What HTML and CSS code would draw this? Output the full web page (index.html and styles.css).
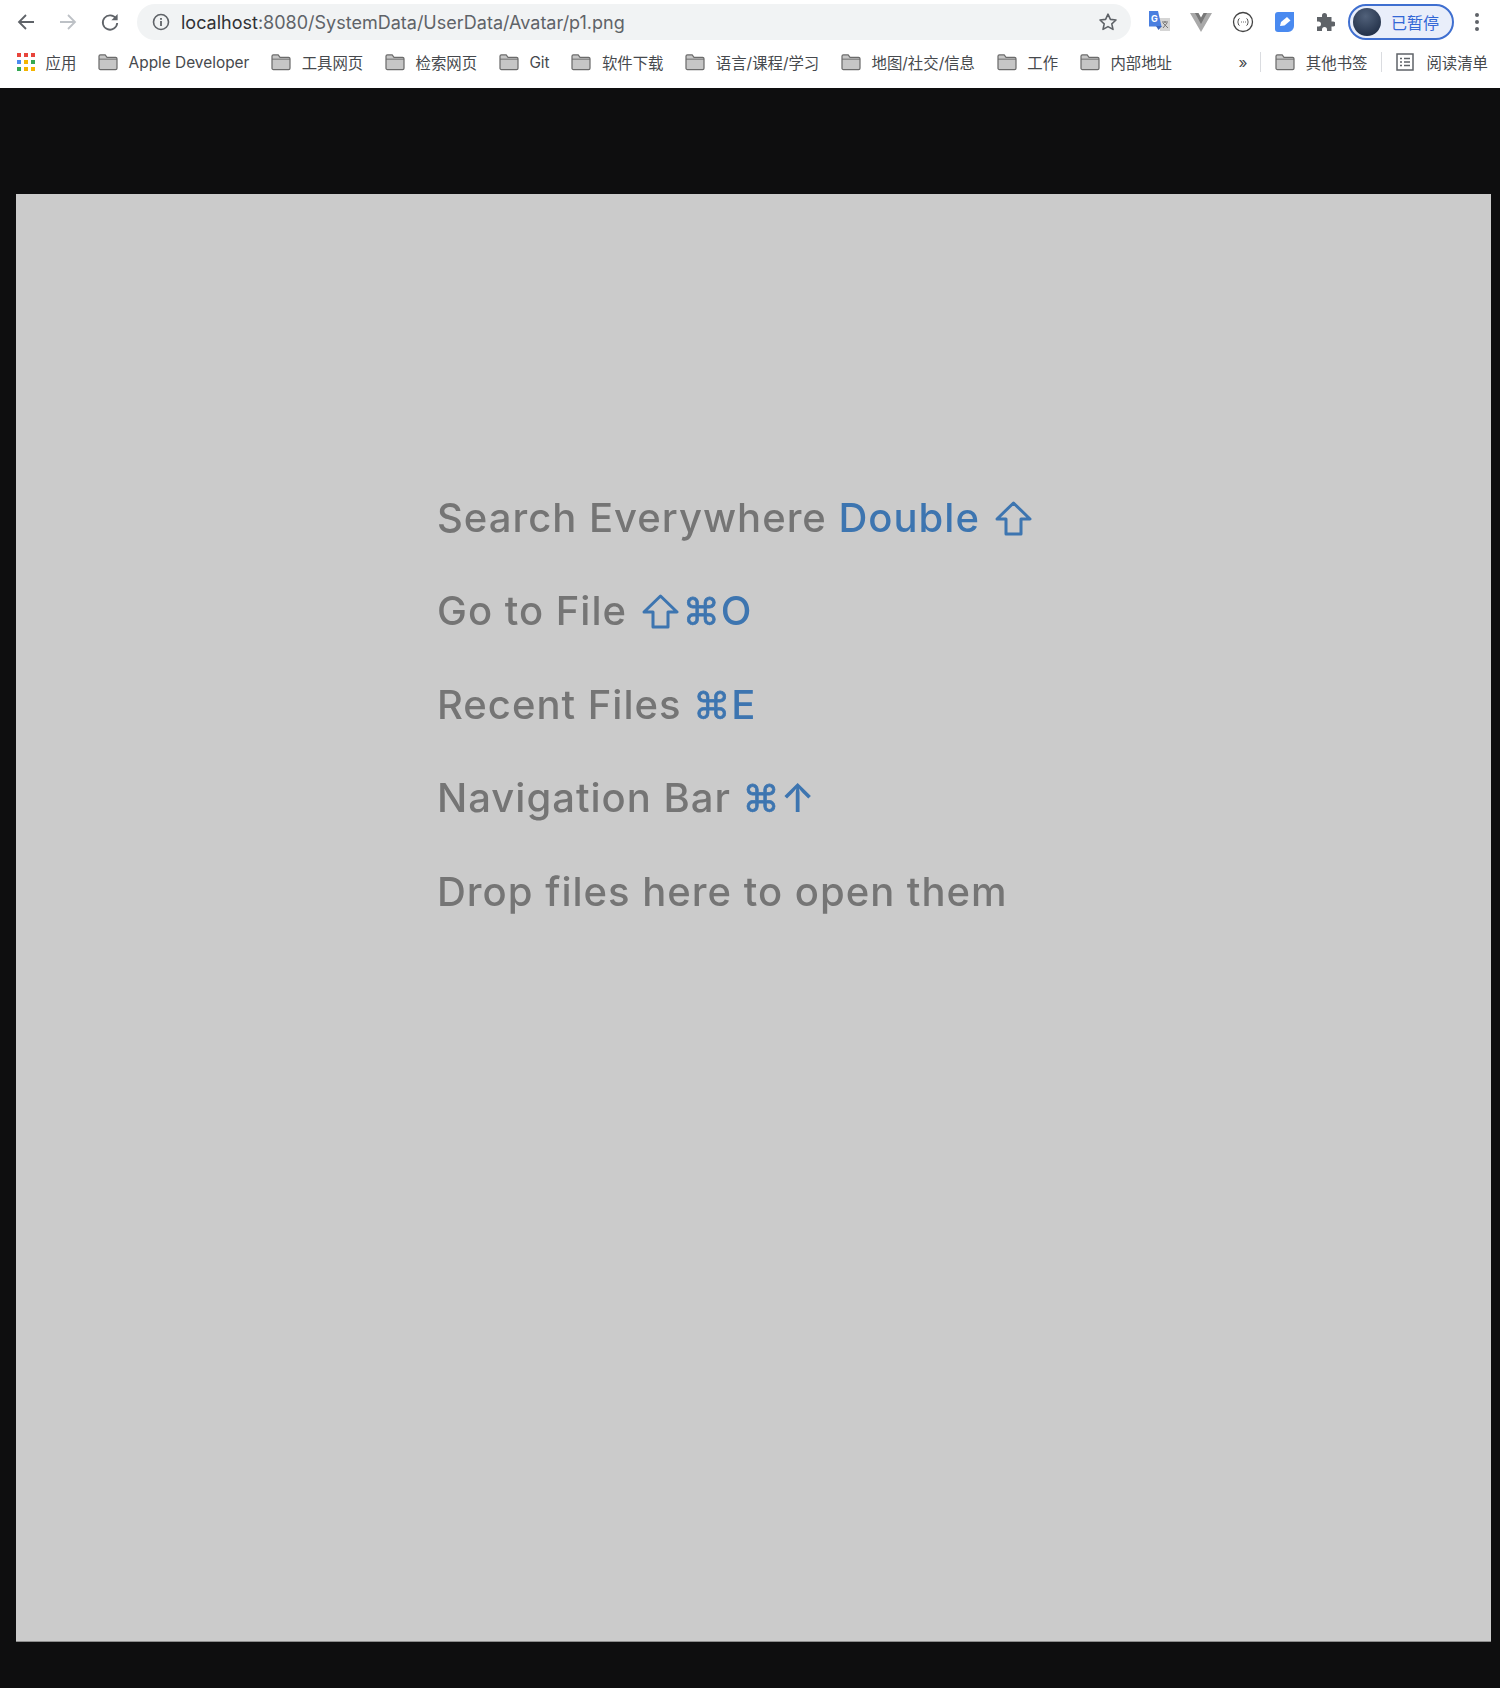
FILE: index.html
```html
<!DOCTYPE html>
<html lang="en">
<head>
  <meta charset="UTF-8">
  <meta name="viewport" content="width=device-width, initial-scale=1.0">
  <title>p1.png</title>
  <link rel="stylesheet" href="styles.css">
</head>
<body>

  <div class="toolbar">
    <svg class="nav-icon" viewBox="0 0 20 20"><path d="M18 10H3M10 3l-7 7 7 7" fill="none" stroke="#5f6368" stroke-width="1.8"/></svg>
    <svg class="nav-icon" viewBox="0 0 20 20"><path d="M2 10h15M10 3l7 7-7 7" fill="none" stroke="#bdc1c6" stroke-width="1.8"/></svg>
    <svg class="nav-icon" viewBox="0 0 20 20"><path d="M16 6.500A7.200 7.200 0 1 0 17.200 11" fill="none" stroke="#5f6368" stroke-width="1.8"/><path d="M17.600 2v6.200h-6.200z" fill="#5f6368"/></svg>

    <div class="address">
      <svg class="info-icon" viewBox="0 0 18 18"><circle cx="9" cy="9" r="7.500" fill="none" stroke="#5f6368" stroke-width="1.600"/><rect x="8.100" y="8" width="1.800" height="5" fill="#5f6368"/><rect x="8.100" y="5" width="1.800" height="1.800" fill="#5f6368"/></svg>
      <span class="url"><span class="host">localhost</span>:8080/SystemData/UserData/Avatar/p1.png</span>
      <svg class="star-icon" viewBox="0 0 20 20"><path d="M10 2.200l2.400 5.200 5.600.6-4.200 3.800 1.200 5.600L10 14.600l-5 2.800 1.200-5.600L2 8l5.600-.6z" fill="none" stroke="#5f6368" stroke-width="1.600" stroke-linejoin="round"/></svg>
    </div>

    <div class="extensions">
      <svg class="ext-icon" viewBox="0 0 22 24"><path d="M11 8h11v13H12z" fill="#d5d5d5"/><path d="M1 1h9l3.500 15.500H1z" fill="#4a7fe0"/><path d="M8 16h6l-3.500 4z" fill="#3b66bd"/><text x="3" y="12" class="ext-letter">G</text><path d="M14 12h6M17 11v2M15 18l4-5M15 13l5 5" stroke="#777" stroke-width="1"/></svg>
      <svg class="ext-icon" viewBox="0 0 22 24"><path d="M0 3h7l4 7 4-7h7L11 22z" fill="#a9a9a9"/><path d="M5 3h3.500L11 7.500 13.500 3H17L11 14z" fill="#777"/></svg>
      <svg class="ext-icon" viewBox="0 0 22 24"><circle cx="11" cy="12" r="9.500" fill="none" stroke="#444" stroke-width="1.300"/><path d="M7.500 8.500c-1.500 0-1 3.500-2 3.500 1 0 .5 3.500 2 3.500M14.500 8.500c1.500 0 1 3.500 2 3.500-1 0-.5 3.500-2 3.500M9 12h.8M11 12h.8M13 12h.8" fill="none" stroke="#444" stroke-width="1"/></svg>
      <svg class="ext-icon" viewBox="0 0 22 24"><path d="M4 2h16v14a6 6 0 0 1-6 6H4a3 3 0 0 1-3-3V5a3 3 0 0 1 3-3z" fill="#4a8af0"/><path d="M6 16l1-4 6-5 3.500 3.500-6 5z" fill="#fff"/></svg>
      <svg class="ext-icon puzzle" viewBox="0 0 20 20"><path d="M7 3.500a2.500 2.500 0 0 1 5 0V5h4.500v4.500H18a2.500 2.500 0 0 1 0 5h-1.500V19H12v-1.500a2.500 2.500 0 0 0-5 0V19H2v-4.500h1.500a2.500 2.500 0 0 0 0-5H2V5h5z" fill="#5f6368"/></svg>
    </div>

    <div class="profile">
      <span class="avatar"></span>
      <span class="profile-text">已暂停</span>
    </div>
    <div class="kebab"><i></i><i></i><i></i></div>
  </div>

  <div class="bookmarks">
    <div class="bookmark">
      <svg class="apps-icon" viewBox="0 0 18 18">
        <rect x="0" y="0" width="4" height="4" fill="#e8453c"/><rect x="7" y="0" width="4" height="4" fill="#e8453c"/><rect x="14" y="0" width="4" height="4" fill="#e8453c"/>
        <rect x="0" y="7" width="4" height="4" fill="#4a8af0"/><rect x="7" y="7" width="4" height="4" fill="#f4b400"/><rect x="14" y="7" width="4" height="4" fill="#34a853"/>
        <rect x="0" y="14" width="4" height="4" fill="#34a853"/><rect x="7" y="14" width="4" height="4" fill="#f4b400"/><rect x="14" y="14" width="4" height="4" fill="#f4b400"/>
      </svg>
      <span>应用</span>
    </div>
    <div class="bookmark"><svg class="folder"><use href="#folder"/></svg><span>Apple Developer</span></div>
    <div class="bookmark"><svg class="folder"><use href="#folder"/></svg><span>工具网页</span></div>
    <div class="bookmark"><svg class="folder"><use href="#folder"/></svg><span>检索网页</span></div>
    <div class="bookmark"><svg class="folder"><use href="#folder"/></svg><span>Git</span></div>
    <div class="bookmark"><svg class="folder"><use href="#folder"/></svg><span>软件下载</span></div>
    <div class="bookmark"><svg class="folder"><use href="#folder"/></svg><span>语言/课程/学习</span></div>
    <div class="bookmark"><svg class="folder"><use href="#folder"/></svg><span>地图/社交/信息</span></div>
    <div class="bookmark"><svg class="folder"><use href="#folder"/></svg><span>工作</span></div>
    <div class="bookmark"><svg class="folder"><use href="#folder"/></svg><span>内部地址</span></div>
    <div class="more">»</div>
    <div class="divider"></div>
    <div class="bookmark other"><svg class="folder"><use href="#folder"/></svg><span>其他书签</span></div>
    <div class="divider"></div>
    <div class="bookmark last">
      <svg class="reading" viewBox="0 0 18 18"><rect x="1" y="1" width="16" height="16" fill="none" stroke="#5f6368" stroke-width="1.500"/><path d="M4 5.500h2M8 5.500h6M4 9h2M8 9h6M4 12.500h2M8 12.500h6" stroke="#5f6368" stroke-width="1.300"/></svg>
      <span>阅读清单</span>
    </div>
  </div>

  <div class="viewer">
    <div class="picture">
      <p class="hint">Search Everywhere <span class="key">Double <svg class="shift"><use href="#shift"/></svg></span></p>
      <p class="hint">Go to File <span class="key"><svg class="shift"><use href="#shift"/></svg><span class="sym">⌘</span>O</span></p>
      <p class="hint">Recent Files <span class="key"><span class="sym">⌘</span>E</span></p>
      <p class="hint">Navigation Bar <span class="key"><span class="sym">⌘</span>↑</span></p>
      <p class="hint">Drop files here to open them</p>
    </div>
  </div>

  <svg class="defs" width="0" height="0">
    <symbol id="folder" viewBox="0 0 21 19">
      <path d="M1 3.500a1.500 1.500 0 0 1 1.500-1.500h5l2 2.500h9a1.500 1.500 0 0 1 1.500 1.500v10a1.500 1.500 0 0 1-1.500 1.500h-16a1.500 1.500 0 0 1-1.500-1.500z" fill="#c6c6c6" stroke="#6b6b6b" stroke-width="1.300"/>
      <path d="M1 6.500h19" stroke="#6b6b6b" stroke-width="1"/>
    </symbol>
    <symbol id="shift" viewBox="0 0 37 35">
      <path d="M18.500 2L35 18H26V33H11V18H2z" fill="none" stroke="#3d75b0" stroke-width="3" stroke-linejoin="round"/>
    </symbol>
  </svg>

</body>
</html>
```

FILE: styles.css
```css
body {
  font-family: "Inter", "Noto Sans CJK SC", sans-serif;
  margin: 0;
  width: 1500px;
  height: 1688px;
  display: flex;
  flex-direction: column;
  background-color: #0e0e0f;
  overflow: hidden;
}

/* top toolbar */
.toolbar {
  height: 44px;
  flex: none;
  display: flex;
  align-items: center;
  background-color: #ffffff;
  padding-left: 16px;
}
.nav-icon {
  width: 20px;
  height: 20px;
  flex: none;
  margin-right: 22px;
}
.address {
  width: 994px;
  height: 36px;
  flex: none;
  box-sizing: border-box;
  margin-left: -5px;
  padding: 0 13px 0 15px;
  display: flex;
  align-items: center;
  background-color: #f1f3f4;
  border-radius: 18px;
}
.info-icon {
  width: 18px;
  height: 18px;
  margin-right: 11px;
}
.url {
  flex: 1;
  font-family: "Inter", sans-serif;
  font-size: 18px;
  color: #5f6368;
}
.host {
  color: #303134;
}
.star-icon {
  width: 20px;
  height: 20px;
}
.extensions {
  display: flex;
  align-items: center;
  gap: 20px;
  margin-left: 17px;
}
.ext-icon {
  width: 22px;
  height: 24px;
}
.ext-letter {
  font-size: 9px;
  font-weight: 700;
  fill: #ffffff;
}
.puzzle {
  width: 20px;
  height: 20px;
  margin-left: -1px;
}
.profile {
  width: 106px;
  height: 36px;
  flex: none;
  box-sizing: border-box;
  margin-left: 13px;
  display: flex;
  align-items: center;
  padding-left: 3px;
  background-color: #e9eefa;
  border: 2px solid #3f6fd0;
  border-radius: 18px;
}
.avatar {
  width: 28px;
  height: 28px;
  border-radius: 50%;
  background: radial-gradient(circle at 45% 30%, #51617a, #1f2d45 85%);
}
.profile-text {
  margin-left: 10px;
  font-size: 16px;
  color: #3367d6;
}
.kebab {
  display: flex;
  flex-direction: column;
  gap: 3px;
  margin-left: 21px;
}
.kebab i {
  width: 4px;
  height: 4px;
  border-radius: 50%;
  background-color: #5f6368;
}

/* bookmarks bar */
.bookmarks {
  height: 44px;
  flex: none;
  box-sizing: border-box;
  display: flex;
  align-items: center;
  background-color: #ffffff;
  padding: 0 12px 8px 17px;
  font-size: 15.4px;
  color: #46494d;
}
.bookmark {
  flex: none;
  display: flex;
  align-items: center;
  gap: 10.5px;
  margin-right: 21.8px;
  white-space: nowrap;
}
.bookmark.other {
  margin-right: 14px;
}
.bookmark.last {
  gap: 12px;
  margin-right: 0;
}
.folder {
  width: 20px;
  height: 18px;
}
.apps-icon {
  width: 18px;
  height: 18px;
}
.reading {
  width: 18px;
  height: 18px;
}
.more {
  margin-left: auto;
  margin-right: 13px;
}
.divider {
  width: 1px;
  height: 20px;
  flex: none;
  margin-right: 14px;
  background-color: #dadce0;
}
.defs {
  position: absolute;
}

/* image viewer */
.viewer {
  flex: 1;
  padding: 106px 9px 46px 16px;
  display: flex;
}
.picture {
  flex: 1;
  box-sizing: border-box;
  padding: 277px 0 0 421px;
  background-color: #cbcbcb;
  border-bottom: 1px solid #8c8c8c;
}
.hint {
  height: 93.4px;
  margin: 0;
  line-height: 93.4px;
  font-size: 40px;
  font-weight: 450;
  letter-spacing: 1px;
  color: #757575;
  white-space: nowrap;
  filter: blur(0.5px);
}
.key {
  color: #3d75b0;
}
.sym {
  font-family: "DejaVu Sans", sans-serif;
  font-size: 37px;
  -webkit-text-stroke: 0.7px #3d75b0;
}
.shift {
  width: 37px;
  height: 35px;
  margin: 0 4px 0 3px;
  vertical-align: -4px;
}
```
